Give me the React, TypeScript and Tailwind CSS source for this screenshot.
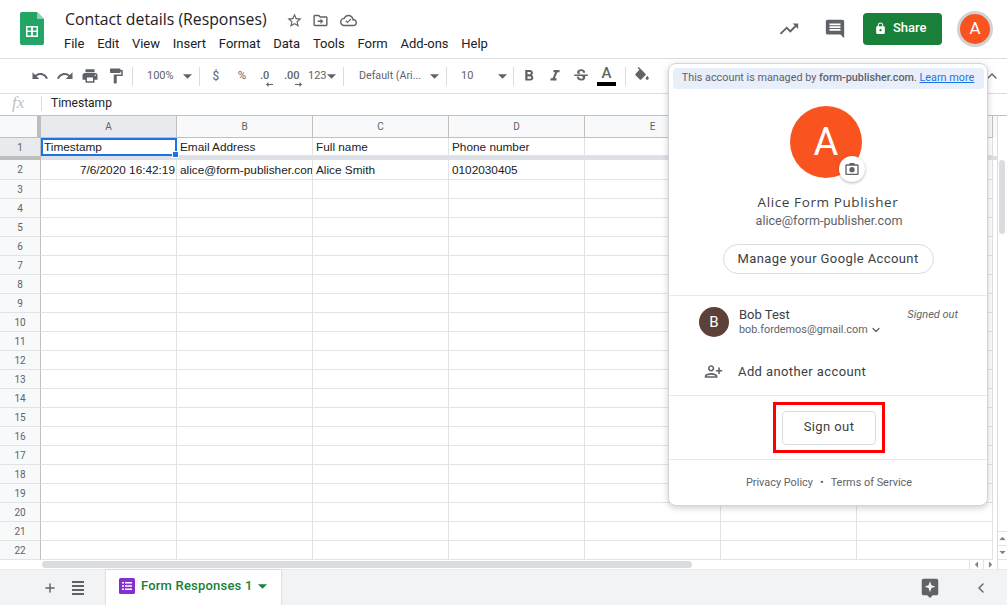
import React from 'react';
import { ChevronDown, ChevronLeft, ChevronUp, Plus } from 'lucide-react';

const P = {
  undo: 'M12.5 8c-2.65 0-5.05.99-6.9 2.6L2 7v9h9l-3.62-3.62c1.39-1.16 3.16-1.88 5.12-1.88 3.54 0 6.55 2.31 7.6 5.5l2.37-.78C21.08 11.03 17.15 8 12.5 8z',
  redo: 'M18.4 10.6C16.55 8.99 14.15 8 11.5 8c-4.65 0-8.58 3.03-9.96 7.22L3.9 16c1.05-3.19 4.05-5.5 7.6-5.5 1.95 0 3.73.72 5.12 1.88L13 16h9V7l-3.6 3.6z',
  print: 'M19 8H5c-1.66 0-3 1.34-3 3v6h4v4h12v-4h4v-6c0-1.66-1.34-3-3-3zm-3 11H8v-5h8v5zm3-7c-.55 0-1-.45-1-1s.45-1 1-1 1 .45 1 1-.45 1-1 1zm-1-9H6v4h12V3z',
  paint: 'M18 4V3c0-.55-.45-1-1-1H5c-.55 0-1 .45-1 1v4c0 .55.45 1 1 1h12c.55 0 1-.45 1-1V6h1v4H9v11c0 .55.45 1 1 1h2c.55 0 1-.45 1-1v-9h8V4h-3z',
  star: 'M22 9.24l-7.19-.62L12 2 9.19 8.63 2 9.24l5.46 4.73L5.82 21 12 17.27 18.18 21l-1.63-7.03L22 9.24zM12 15.4l-3.76 2.27 1-4.28-3.32-2.88 4.38-.38L12 6.1l1.71 4.04 4.38.38-3.32 2.88 1 4.28L12 15.4z',
  folder: 'M20 6h-8l-2-2H4c-1.1 0-2 .9-2 2v12c0 1.1.9 2 2 2h16c1.1 0 2-.9 2-2V8c0-1.1-.9-2-2-2zm0 12H4V6h5.17l2 2H20v10zm-8-1l4-4-4-4v3H8v2h4v3z',
  cloud: 'M19.35 10.04C18.67 6.59 15.64 4 12 4 9.11 4 6.6 5.64 5.35 8.04 2.34 8.36 0 10.91 0 14c0 3.31 2.69 6 6 6h13c2.76 0 5-2.24 5-5 0-2.64-2.05-4.78-4.65-4.96zM19 18H6c-2.21 0-4-1.79-4-4s1.79-4 4-4h.71C7.37 7.69 9.48 6 12 6c3.04 0 5.5 2.46 5.5 5.5v.5H19c1.66 0 3 1.34 3 3s-1.34 3-3 3zm-8.5-2l-3-3 1.2-1.2 1.8 1.8 4.3-4.3 1.2 1.2-5.5 5.5z',
  trend: 'M16 6l2.29 2.29-4.88 4.88-4-4L2 16.59 3.41 18l6-6 4 4 6.3-6.29L22 12V6z',
  comment: 'M21.99 4c0-1.1-.89-2-1.99-2H4c-1.1 0-2 .9-2 2v12c0 1.1.9 2 2 2h14l4 4-.01-18zM18 14H6v-2h12v2zm0-3H6V9h12v2zm0-3H6V6h12v2z',
  lock: 'M18 8h-1V6c0-2.76-2.24-5-5-5S7 3.24 7 6v2H6c-1.1 0-2 .9-2 2v10c0 1.1.9 2 2 2h12c1.1 0 2-.9 2-2V10c0-1.1-.9-2-2-2zm-6 9c-1.1 0-2-.9-2-2s.9-2 2-2 2 .9 2 2-.9 2-2 2zm3.1-9H8.9V6c0-1.71 1.39-3.1 3.1-3.1 1.71 0 3.1 1.39 3.1 3.1v2z',
  bold: 'M15.6 10.79c.97-.67 1.65-1.77 1.65-2.79 0-2.26-1.75-4-4-4H7v14h7.04c2.09 0 3.71-1.7 3.71-3.79 0-1.52-.86-2.82-2.15-3.42zM10 6.5h3c.83 0 1.5.67 1.5 1.5s-.67 1.5-1.5 1.5h-3v-3zm3.5 9H10v-3h3.5c.83 0 1.5.67 1.5 1.5s-.67 1.5-1.5 1.5z',
  italic: 'M10 4v3h2.21l-3.42 8H6v3h8v-3h-2.21l3.42-8H18V4z',
  strike: 'M6.85 7.08C6.85 4.37 9.45 3 12.24 3c1.64 0 3 .49 3.9 1.28.77.65 1.46 1.73 1.46 3.24h-3.01c0-.31-.05-.59-.15-.85-.29-.86-1.2-1.28-2.25-1.28-1.86 0-2.34 1.02-2.34 1.7 0 .48.25.88.74 1.21.38.25.77.48 1.41.7H7.39c-.21-.34-.54-.89-.54-1.92zM21 12v-2H3v2h9.62c1.15.45 1.96.75 1.96 1.97 0 1-.81 1.67-2.28 1.67-1.54 0-2.93-.54-2.93-2.51H6.4c0 .55.08 1.13.24 1.58.81 2.29 3.29 3.3 5.67 3.3 2.27 0 5.3-.89 5.3-4.05 0-.3-.01-1.16-.48-1.94H21V12z',
  fill: 'M16.56 8.94L7.62 0 6.21 1.41l2.38 2.38-5.15 5.15c-.59.59-.59 1.54 0 2.12l5.5 5.5c.29.29.68.44 1.06.44s.77-.15 1.06-.44l5.5-5.5c.59-.58.59-1.53 0-2.12zM19 11.5s-2 2.17-2 3.5c0 1.1.9 2 2 2s2-.9 2-2c0-1.33-2-3.5-2-3.5z',
  personAdd: 'M15 12c2.21 0 4-1.79 4-4s-1.79-4-4-4-4 1.79-4 4 1.79 4 4 4zm0-6c1.1 0 2 .9 2 2s-.9 2-2 2-2-.9-2-2 .9-2 2-2zm0 8c-2.67 0-8 1.34-8 4v2h16v-2c0-2.66-5.33-4-8-4zm-6 4c.22-.72 3.31-2 6-2 2.7 0 5.8 1.29 6 2H9zm-3-3v-3h3v-2H6V7H4v3H1v2h3v3h2z',
  camera: 'M20 5h-3.17L15 3H9L7.17 5H4c-1.1 0-2 .9-2 2v12c0 1.1.9 2 2 2h16c1.1 0 2-.9 2-2V7c0-1.1-.9-2-2-2zm0 14H4V7h16v12zM12 9a4 4 0 100 8 4 4 0 000-8z',
  explore: 'M5 2h14c1.1 0 2 .9 2 2v14c0 1.1-.9 2-2 2h-4l-3 3-3-3H5c-1.1 0-2-.9-2-2V4c0-1.1.9-2 2-2zm7 2.5l-1.6 4.4L6 10.5l4.4 1.6 1.6 4.4 1.6-4.4 4.4-1.6-4.4-1.6L12 4.5z',
};

const Icon = ({ d, className }: { d: string; className?: string }) => (
  <svg viewBox="0 0 24 24" className={className} fill="currentColor">
    <path d={d} fillRule="evenodd" />
  </svg>
);

const Caret = ({ className = '' }: { className?: string }) => (
  <svg viewBox="0 0 10 5" className={`w-[9px] h-[5px] shrink-0 ${className}`} fill="currentColor">
    <path d="M0 0l5 5 5-5z" />
  </svg>
);

const Sep = ({ className = '' }: { className?: string }) => (
  <div className={`w-px h-[19px] bg-[#dadce0] shrink-0 ${className}`} />
);

const ToolBtn = ({ d, wide }: { d: string; wide?: boolean }) => (
  <div className={`${wide ? 'w-[26px]' : 'w-[25.4px]'} flex justify-center shrink-0`}>
    <Icon d={d} className="w-[18px] h-[18px] text-[#5f6368]" />
  </div>
);

// decimal buttons: digits with a small arrow under them
const Decimal = ({ label, left, className }: { label: string; left?: boolean; className: string }) => (
  <div className={`flex flex-col shrink-0 ${className}`}>
    <span className="text-[11px] leading-[11px] font-medium">{label}</span>
    <svg viewBox="0 0 7 5" className="w-[7px] h-[5px] mt-[1px] self-end -mr-[2px]" fill="currentColor">
      <path d={left ? 'M0 2.5L2.5 0v2H7v1H2.5v2z' : 'M7 2.5L4.5 0v2H0v1h4.5v2z'} />
    </svg>
  </div>
);

const menus = ['File', 'Edit', 'View', 'Insert', 'Format', 'Data', 'Tools', 'Form', 'Add-ons', 'Help'];
const columns = ['A', 'B', 'C', 'D', 'E', 'F', 'G'];
const emptyRows = Array.from({ length: 20 }, (_, i) => i + 3);
const row1 = ['Timestamp', 'Email Address', 'Full name', 'Phone number', '', '', ''];
const row2 = ['', 'alice@form-publisher.com', 'Alice Smith', '0102030405', '', '', ''];

const Cell = ({ children, className = '' }: { children?: React.ReactNode; className?: string }) => (
  <div className={`w-[136px] shrink-0 h-full border-r border-b border-[#e2e3e3] pl-[3px] pr-[1px] overflow-hidden whitespace-nowrap flex items-center ${className}`}>
    {children}
  </div>
);

const Grid = () => (
  <div className="flex-1 flex min-h-0 font-['Liberation_Sans',sans-serif] text-[11.8px] text-[#202124]">
    <div className="w-[997px] shrink-0 overflow-hidden">
      {/* column letters */}
      <div className="flex h-[22px] bg-[#f8f9fa] text-[10px] text-[#5f6368] font-['Roboto',sans-serif]">
        <div className="w-[41px] shrink-0 border-b border-[#c0c0c0] border-r-[4px] border-r-[#bdbdbd]" />
        {columns.map((c, i) => (
          <div
            key={c}
            className={`w-[136px] shrink-0 flex items-center justify-center border-r border-b border-[#c0c0c0] ${i === 0 ? 'bg-[#e8eaed]' : ''}`}
          >
            {c}
          </div>
        ))}
      </div>
      {/* header row, with the freeze bar below it */}
      <div className="flex h-[18px]">
        <div className="w-[41px] shrink-0 bg-[#e8eaed] border-r border-[#c0c0c0] flex items-center justify-center text-[10px] text-[#5f6368] font-['Roboto',sans-serif]">1</div>
        {row1.map((t, i) =>
          i === 0 ? (
            <div key={i} className="relative w-[136px] shrink-0 border-2 border-[#1a73e8] px-[1px] pt-[1px] flex items-center">
              {t}
              <div className="absolute -right-[4px] -bottom-[4px] w-[7px] h-[7px] bg-[#1a73e8] border border-white z-10" />
            </div>
          ) : (
            <Cell key={i} className="pt-[2px]">{t}</Cell>
          )
        )}
      </div>
      <div className="flex h-[4px]">
        <div className="w-[41px] shrink-0 bg-[#bdbdbd]" />
        <div className="flex-1 bg-[#dde0e7]" />
      </div>
      <div className="flex h-[20px]">
        <div className="w-[41px] shrink-0 bg-[#f8f9fa] border-r border-b border-r-[#c0c0c0] border-b-[#e2e3e3] flex items-center justify-center text-[10px] text-[#5f6368] font-['Roboto',sans-serif]">2</div>
        <Cell className="pt-[3px]"><span className="w-full text-right">7/6/2020 16:42:19</span></Cell>
        {row2.slice(1).map((t, i) => (
          <Cell key={i} className="pt-[3px]">{t}</Cell>
        ))}
      </div>
      {emptyRows.map((n) => (
        <div key={n} className="flex h-[19px]">
          <div className="w-[41px] shrink-0 bg-[#f8f9fa] border-r border-b border-r-[#c0c0c0] border-b-[#e2e3e3] flex items-center justify-center text-[10px] text-[#5f6368] font-['Roboto',sans-serif]">{n}</div>
          {columns.map((c) => (
            <Cell key={c} />
          ))}
        </div>
      ))}
      {/* horizontal scrollbar */}
      <div className="flex h-[9px]">
        <div className="w-[42px] shrink-0" />
        <div className="w-[650px] h-[7px] mt-[1px] rounded-full bg-[#dadce0]" />
        <div className="ml-auto flex text-[#80868b]">
          <div className="w-[14px] flex items-center justify-center border-l border-[#e2e3e3]"><Caret className="rotate-90 scale-75" /></div>
          <div className="w-[14px] flex items-center justify-center border-l border-[#e2e3e3]"><Caret className="-rotate-90 scale-75" /></div>
        </div>
      </div>
    </div>
    {/* vertical scrollbar */}
    <div className="flex-1 flex flex-col border-l border-[#dadce0] text-[#80868b]">
      <div className="h-[44px] shrink-0" />
      <div className="h-[74px] shrink-0 ml-[1px] mr-[2px] rounded-full bg-[#dadce0]" />
      <div className="flex-1" />
      <div className="h-[14px] flex items-center justify-center border-t border-[#e2e3e3]"><Caret className="rotate-180 scale-75" /></div>
      <div className="h-[14px] flex items-center justify-center border-t border-[#e2e3e3]"><Caret className="scale-75" /></div>
      <div className="h-[10px] border-t border-[#e2e3e3]" />
    </div>
  </div>
);

const AccountMenu = () => (
  <div className="absolute left-[668px] top-[63px] w-[320px] h-[443px] bg-white rounded-lg border border-[#d4d5d6] shadow-[0_2px_6px_rgba(60,64,67,0.25)] z-20 flex flex-col items-center font-['Roboto',sans-serif]">
    <div className="mt-[4px] w-[311px] h-[21px] rounded bg-[#e8eefa] flex items-center justify-center text-[10.8px] text-[#5f6368] whitespace-nowrap">
      <span>This account is managed by <span className="font-medium">form-publisher.com</span>.&nbsp;</span>
      <span className="text-[#1a73e8] underline">Learn more</span>
    </div>
    <div className="relative mt-[17px] mr-[4px] w-[72px] h-[72px] rounded-full bg-[#f9541f] flex items-center justify-center text-white text-[38px]">
      A
      <div className="absolute left-[49px] top-[50px] w-[26px] h-[26px] rounded-full bg-white shadow-[0_1px_3px_rgba(60,64,67,0.4)] flex items-center justify-center">
        <Icon d={P.camera} className="w-[16px] h-[16px] text-[#5f6368]" />
      </div>
    </div>
    <div className="mt-[15px] text-[13.5px] leading-[18px] font-medium tracking-[0.6px] text-[#3c4043] font-['Open_Sans',sans-serif]">Alice Form Publisher</div>
    <div className="mt-[1px] ml-[2px] text-[12.6px] leading-[18px] text-[#5f6368]">alice@form-publisher.com</div>
    <div className="mt-[14px] w-[211px] h-[30px] rounded-full border border-[#dadce0] flex items-center justify-center text-[13px] tracking-[0.4px] text-[#3c4043]">
      Manage your Google Account
    </div>
    <div className="mt-[21px] w-full border-t border-[#e8eaed]" />
    <div className="w-full h-[54px] flex items-start pl-[30px] pr-[29px] pt-[11px]">
      <div className="w-[30px] h-[30px] rounded-full bg-[#5d4037] flex items-center justify-center text-white text-[15px]">B</div>
      <div className="ml-[10px] flex-1">
        <div className="text-[13px] leading-[15px] text-[#3c4043]">Bob Test</div>
        <div className="flex items-center text-[10.85px] leading-[15px] text-[#5f6368]">
          bob.fordemos@gmail.com
          <ChevronDown className="ml-[2px] w-[12px] h-[12px]" strokeWidth={2.5} />
        </div>
      </div>
      <div className="text-[11px] leading-[15px] italic text-[#5f6368]">Signed out</div>
    </div>
    <div className="w-full h-[42px] flex items-center pl-[35px]">
      <Icon d={P.personAdd} className="w-[19px] h-[19px] text-[#5f6368] -scale-x-100" />
      <span className="ml-[15px] pt-[2px] text-[13px] tracking-[0.4px] text-[#3c4043]">Add another account</span>
    </div>
    <div className="mt-[3px] w-full border-t border-[#e8eaed]" />
    <div className="mt-[6px] ml-[2px] w-[112px] h-[51px] border-[3px] border-[#fe0000] flex items-center justify-center">
      <div className="w-[94px] h-[34px] pb-[2px] rounded border border-[#dadce0] flex items-center justify-center text-[13px] tracking-[0.4px] text-[#3c4043]">Sign out</div>
    </div>
    <div className="mt-[6px] w-full border-t border-[#e8eaed]" />
    <div className="mt-[15px] ml-[2px] flex items-center text-[10.9px] leading-[16px] text-[#5f6368]">
      <span>Privacy Policy</span>
      <span className="mx-[7px]">•</span>
      <span>Terms of Service</span>
    </div>
  </div>
);

const App = () => (
  <div className="relative w-[1007px] h-[605px] overflow-hidden bg-white flex flex-col font-['Roboto',sans-serif]">
    {/* title bar */}
    <div className="h-[59px] shrink-0 flex items-start border-b border-[#dadce0]">
      <svg viewBox="0 0 24 33" className="ml-[20px] mt-[12px] w-[24px] h-[33px] shrink-0">
        <path d="M2 0h15l7 7v24a2 2 0 01-2 2H2a2 2 0 01-2-2V2a2 2 0 012-2z" fill="#23a566" />
        <path d="M17 0l7 7h-7z" fill="#8ed1b1" />
        <path d="M6 14h12v11H6zm1.5 1.5V18.5h3.6v-3zm5.4 0v3h3.6v-3zm-5.4 4.5v3.5h3.6V20zm5.4 0v3.5h3.6V20z" fill="#fff" fillRule="evenodd" />
      </svg>
      <div className="ml-[21px]">
        <div className="flex items-center h-[22px] mt-[9px]">
          <span className="text-[15.8px] text-[#202124] font-['Open_Sans',sans-serif] w-[221px] whitespace-nowrap">Contact details (Responses)</span>
          <Icon d={P.star} className="w-[17px] h-[17px] text-[#5f6368]" />
          <Icon d={P.folder} className="ml-[9px] w-[17px] h-[17px] text-[#5f6368]" />
          <Icon d={P.cloud} className="ml-[11px] w-[17px] h-[17px] text-[#5f6368]" />
        </div>
        <div className="flex gap-[12.75px] mt-[3px] -ml-[1px] text-[13px] leading-[20px] text-[#202124]">
          {menus.map((m) => (
            <span key={m}>{m}</span>
          ))}
        </div>
      </div>
      <div className="ml-auto flex items-center mt-[11px] mr-[14px]">
        <Icon d={P.trend} className="w-[22px] h-[22px] text-[#5f6368]" />
        <Icon d={P.comment} className="ml-[24px] w-[22px] h-[22px] text-[#5f6368]" />
        <div className="ml-[17px] w-[79px] h-[32px] rounded bg-[#188038] flex items-center pl-[11px] pb-[2px] gap-[6px] text-white text-[13px] font-medium">
          <Icon d={P.lock} className="w-[13px] h-[13px]" />
          Share
        </div>
        <div className="ml-[15px] w-[36px] h-[36px] rounded-full bg-[#f9541f] border-[3px] border-[#d2d2d2] flex items-center justify-center text-white text-[17px]">A</div>
      </div>
    </div>
    {/* toolbar */}
    <div className="h-[35px] shrink-0 flex items-center pl-[27px] border-b border-[#dadce0] text-[#5f6368] text-[11px]">
      <ToolBtn d={P.undo} />
      <ToolBtn d={P.redo} />
      <ToolBtn d={P.print} />
      <ToolBtn d={P.paint} />
      <Sep className="ml-[3.4px]" />
      <span className="ml-[14px] w-[36.5px] shrink-0">100%</span>
      <Caret />
      <Sep className="ml-[6.5px]" />
      <span className="ml-[4px] w-[24px] text-center text-[12px]">$</span>
      <span className="ml-[2px] w-[24px] text-center text-[11.5px]">%</span>
      <Decimal left label=".0" className="ml-[6px] w-[11px] mt-[5px]" />
      <Decimal label=".00" className="ml-[13px] w-[16px] mt-[5px]" />
      <span className="ml-[8px] w-[19px] text-[11px]">123</span>
      <Caret />
      <Sep className="ml-[7px]" />
      <span className="ml-[15px] w-[71px] shrink-0 text-[10.7px] whitespace-nowrap">Default (Ari...</span>
      <Caret />
      <Sep className="ml-[7px]" />
      <span className="ml-[14px] w-[37px] shrink-0">10</span>
      <Caret />
      <Sep className="ml-[6px]" />
      <div className="ml-[2px] flex">
        <ToolBtn wide d={P.bold} />
        <ToolBtn wide d={P.italic} />
        <ToolBtn wide d={P.strike} />
      </div>
      <div className="w-[25px] h-[22px] flex flex-col items-center">
        <span className="text-[15px] leading-[17px] font-medium">A</span>
        <div className="w-[19px] h-[4px] bg-black" />
      </div>
      <Sep className="ml-[6px]" />
      <div className="ml-[3.3px]"><ToolBtn d={P.fill} /></div>
      <div className="ml-auto mr-[7px]"><ChevronUp className="w-[16px] h-[16px] text-[#5f6368]" /></div>
    </div>
    {/* formula bar */}
    <div className="h-[22px] shrink-0 flex items-center pb-[3px] border-b border-[#c0c0c0]">
      <span className="ml-[12px] w-[29px] font-['Liberation_Serif',serif] italic text-[17px] leading-[20px] text-[#bdc1c6]">fx</span>
      <div className="w-px h-[15px] bg-[#dadce0]" />
      <span className="ml-[9px] text-[12px] text-[#202124]">Timestamp</span>
    </div>
    <Grid />
    {/* sheet tabs */}
    <div className="h-[36px] shrink-0 flex items-center bg-[#f1f3f4] border-t border-[#e8eaed]">
      <Plus className="ml-[43px] w-[14px] h-[14px] text-[#5f6368]" strokeWidth={2.5} />
      <div className="ml-[15px] w-[12px] flex flex-col gap-[2px]">
        <div className="h-[2px] bg-[#5f6368]" />
        <div className="h-[2px] bg-[#5f6368]" />
        <div className="h-[2px] bg-[#5f6368]" />
        <div className="h-[2px] bg-[#5f6368]" />
      </div>
      <div className="ml-[22px] w-[175px] h-full bg-white shadow-[0_0_2px_rgba(60,64,67,0.3)] flex items-center pl-[13px] pb-[3px]">
        <svg viewBox="0 0 16 16" className="w-[16px] h-[16px]">
          <rect width="16" height="16" rx="1.5" fill="#8430ce" />
          <path d="M3 4h2v1.5H3zm3 0h7v1.5H6zM3 7.3h2v1.5H3zm3 0h7v1.5H6zm-3 3.2h2V12H3zm3 0h7V12H6z" fill="#fff" />
        </svg>
        <span className="ml-[6px] text-[13px] font-medium tracking-[0.2px] text-[#188038] whitespace-nowrap">Form Responses 1</span>
        <Caret className="ml-[6px] text-[#188038]" />
      </div>
      <Icon d={P.explore} className="ml-[638px] w-[22px] h-[22px] text-[#5f6368]" />
      <ChevronLeft className="ml-[32px] w-[16px] h-[16px] text-[#5f6368]" strokeWidth={2} />
    </div>
    <AccountMenu />
  </div>
);

export default App;
